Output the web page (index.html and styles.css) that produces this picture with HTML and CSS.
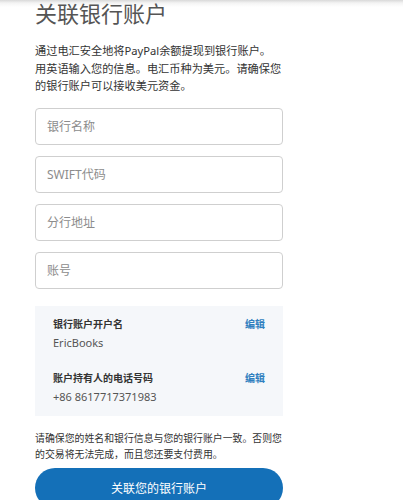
FILE: index.html
```html
<!DOCTYPE html>
<html lang="zh-CN">
<head>
<meta charset="utf-8">
<title>关联银行账户</title>
<link rel="stylesheet" href="styles.css">
</head>
<body>
<div class="page">
  <h1 class="title">关联银行账户</h1>
  <p class="intro">通过电汇安全地将PayPal余额提现到银行账户。<br>用英语输入您的信息。电汇币种为美元。请确保您<br>的银行账户可以接收美元资金。</p>
  <div class="fields">
    <input class="field" type="text" placeholder="银行名称">
    <input class="field" type="text" placeholder="SWIFT代码">
    <input class="field" type="text" placeholder="分行地址">
    <input class="field" type="text" placeholder="账号">
  </div>
  <div class="panel">
    <div class="item">
      <div class="item-head"><span class="label">银行账户开户名</span><a class="edit">编辑</a></div>
      <div class="value">EricBooks</div>
    </div>
    <div class="item">
      <div class="item-head"><span class="label">账户持有人的电话号码</span><a class="edit">编辑</a></div>
      <div class="value">+86 8617717371983</div>
    </div>
  </div>
  <p class="note">请确保您的姓名和银行信息与您的银行账户一致。否则您<br>的交易将无法完成，而且您还要支付费用。</p>
  <button class="submit" type="button">关联您的银行账户</button>
</div>
</body>
</html>
```

FILE: styles.css
```css
html, body {
  margin: 0;
  padding: 0;
  height: 500px;
  overflow: hidden;
}
body {
  background: linear-gradient(to bottom, #d9d9d9 0px, #f4f4f4 3px, #ffffff 7px) no-repeat;
  background-color: #ffffff;
  font-family: "Noto Sans", "Noto Sans CJK SC", sans-serif;
  color: #333333;
}
.page {
  width: 248px;
  padding-left: 35px;
  display: flex;
  flex-direction: column;
}
.title {
  margin: 0;
  font-size: 22px;
  line-height: 24px;
  font-weight: 400;
  color: #555555;
  font-family: "Noto Sans CJK SC", sans-serif;
}
.intro {
  margin: 18px 0 0;
  font-size: 11.2px;
  line-height: 17.5px;
  color: #333333;
  white-space: nowrap;
}
.fields {
  margin-top: 13px;
  display: flex;
  flex-direction: column;
  gap: 11px;
}
.field {
  box-sizing: border-box;
  width: 248px;
  height: 37px;
  margin: 0;
  padding: 0 0 0 11px;
  border: 1px solid #cfcfcf;
  border-radius: 4px;
  background: #ffffff;
  font-family: "Noto Sans", "Noto Sans CJK SC", sans-serif;
  font-size: 12px;
  color: #333333;
  outline: none;
}
.field::placeholder {
  color: #8c8c8c;
}
.panel {
  margin-top: 17px;
  background: #f5f7fa;
  padding: 9px 18px 10px 18px;
  display: flex;
  flex-direction: column;
  gap: 17px;
}
.item-head {
  display: flex;
  justify-content: space-between;
  align-items: center;
  height: 18px;
}
.label {
  font-size: 10px;
  font-weight: 700;
  color: #333333;
  font-family: "Noto Sans CJK SC", sans-serif;
}
.edit {
  font-size: 10px;
  font-weight: 700;
  color: #2f7fbf;
  font-family: "Noto Sans CJK SC", sans-serif;
}
.value {
  margin-top: 1px;
  font-size: 11px;
  line-height: 18px;
  color: #555555;
}
.note {
  margin: 14px 0 0;
  font-size: 9.9px;
  line-height: 16px;
  color: #333333;
  white-space: nowrap;
}
.submit {
  margin-top: 6px;
  width: 248px;
  height: 40px;
  border: none;
  border-radius: 20px;
  background: #1470b8;
  color: #ffffff;
  font-family: "Noto Sans CJK SC", sans-serif;
  font-size: 12px;
  padding: 0;
}
```
